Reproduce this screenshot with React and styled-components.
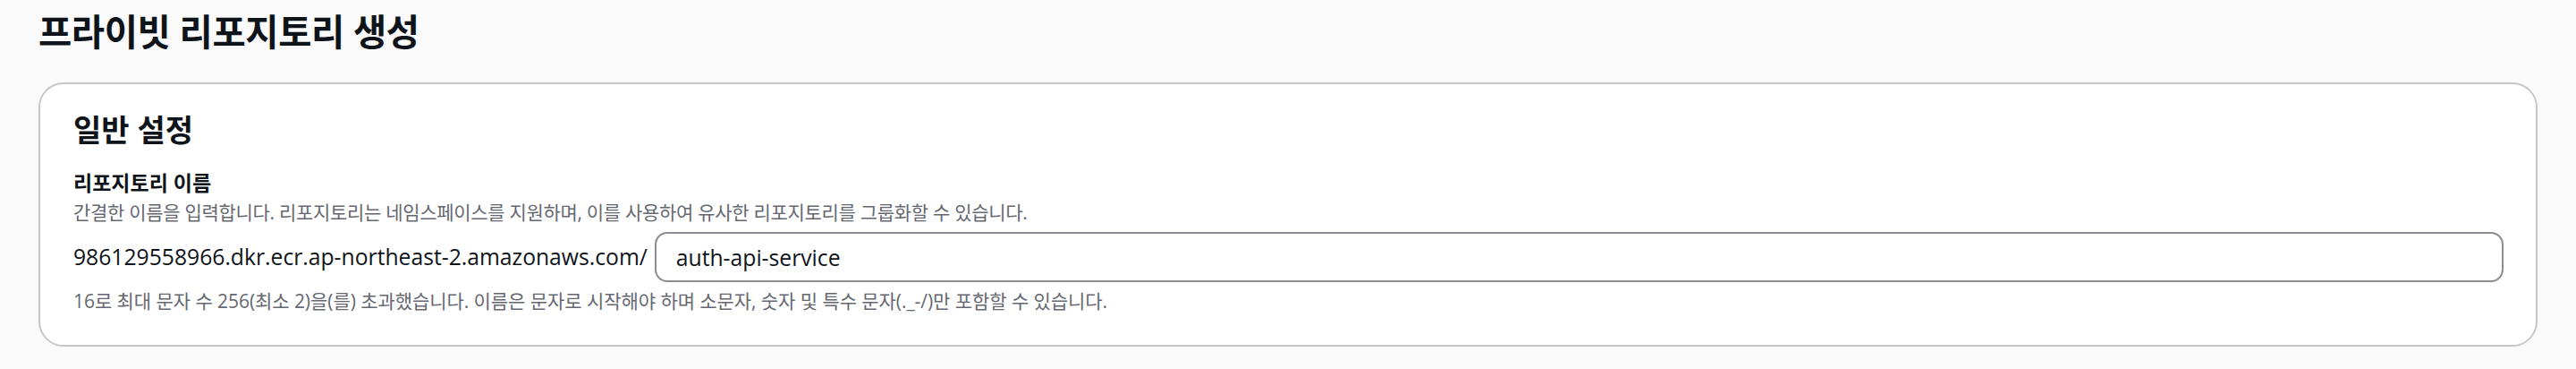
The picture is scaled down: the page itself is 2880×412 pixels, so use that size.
import React from 'react'
import styled, { createGlobalStyle } from 'styled-components'

const GlobalStyle = createGlobalStyle`
    html, body {
        margin: 0;
        padding: 0;
        background: #fafafa;
    }
    body {
        font-family: "Open Sans", "Noto Sans CJK KR", sans-serif;
        color: #0f141a;
        -webkit-font-smoothing: antialiased;
    }
`

export default function App() {
    return (
        <Page>
            <GlobalStyle />
            <PageTitle>프라이빗 리포지토리 생성</PageTitle>
            <Card>
                <CardHeading>일반 설정</CardHeading>
                <Field>
                    <Label>리포지토리 이름</Label>
                    <Hint>간결한 이름을 입력합니다. 리포지토리는 네임스페이스를 지원하며, 이를 사용하여 유사한 리포지토리를 그룹화할 수 있습니다.</Hint>
                    <InputRow>
                        <Prefix>986129558966.dkr.ecr.ap-northeast-2.amazonaws.com/</Prefix>
                        <TextInput defaultValue="auth-api-service" />
                    </InputRow>
                    <Constraint>16로 최대 문자 수 256(최소 2)을(를) 초과했습니다. 이름은 문자로 시작해야 하며 소문자, 숫자 및 특수 문자(._-/)만 포함할 수 있습니다.</Constraint>
                </Field>
            </Card>
        </Page>
    )
}

const Page = styled.main`
    padding: 8px 43px 22px 43px;
`

const PageTitle = styled.h1`
    margin: 0;
    font-size: 40.5px;
    line-height: 56px;
    font-weight: 700;
    letter-spacing: -0.4px;
`

const Card = styled.section`
    margin-top: 28px;
    background: #ffffff;
    border: 2px solid #c6c6cd;
    border-radius: 28px;
    padding: 27px 36px 35px 37px;
`

const CardHeading = styled.h2`
    margin: 0;
    font-size: 34px;
    line-height: 48px;
    font-weight: 700;
`

const Field = styled.div`
    margin-top: 20px;
    display: flex;
    flex-direction: column;
`

const Label = styled.label`
    font-size: 23px;
    line-height: 30px;
    font-weight: 700;
`

const Hint = styled.p`
    margin: 4px 0 0 0;
    font-size: 21px;
    line-height: 28px;
    letter-spacing: -0.3px;
    color: #656871;
`

const InputRow = styled.div`
    margin-top: 8px;
    display: flex;
    align-items: center;
    gap: 8px;
`

const Prefix = styled.span`
    font-size: 24.7px;
    line-height: 34px;
    white-space: nowrap;
`

const TextInput = styled.input`
    flex: 1;
    height: 56px;
    box-sizing: border-box;
    border: 2px solid #8c8c94;
    border-radius: 14px;
    padding: 0 22px;
    font-family: inherit;
    font-size: 24.7px;
    color: #0f141a;
    background: #ffffff;
    outline: none;
`

const Constraint = styled.p`
    margin: 7px 0 0 0;
    font-size: 21px;
    line-height: 28px;
    letter-spacing: -0.06px;
    color: #656871;
`
